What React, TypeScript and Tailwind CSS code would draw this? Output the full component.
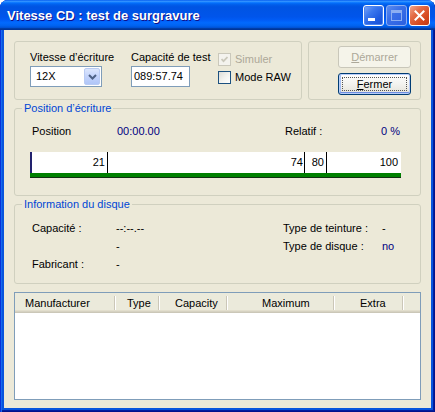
import React from "react";

const navy = "text-[#000080]";

function TitleButtons() {
  return (
    <div className="flex gap-[2px]">
      <div className="relative h-[21px] w-[21px] rounded-[3px] border border-white bg-[linear-gradient(135deg,#7FA8F8_0%,#3C78EE_35%,#1F5BE0_70%,#1A4FD0_100%)] shadow-[inset_0_0_0_1px_#4A82F0]">
        <span className="absolute left-[4px] top-[12px] h-[3px] w-[7px] bg-white" />
      </div>
      <div className="relative h-[21px] w-[21px] rounded-[3px] border border-[#8CAEF2] bg-[linear-gradient(135deg,#5A8CF0_0%,#3A6FE8_40%,#2A5FE0_100%)]">
        <span className="absolute left-[4px] top-[4px] h-[11px] w-[11px] border border-t-[3px] border-[#8CAEF2]" />
      </div>
      <div className="flex h-[21px] w-[21px] items-center justify-center rounded-[3px] border border-white bg-[linear-gradient(135deg,#F0A58C_0%,#E36A45_35%,#D6491F_70%,#C23A16_100%)]">
        <svg width="11" height="11" viewBox="0 0 11 11">
          <path d="M1.5 1.5 L9.5 9.5 M9.5 1.5 L1.5 9.5" stroke="white" strokeWidth="2" strokeLinecap="square" />
        </svg>
      </div>
    </div>
  );
}

function Checkbox({ label, checked, disabled }: { label: string; checked?: boolean; disabled?: boolean }) {
  return (
    <div className="flex h-[13px] items-center">
      <span
        className={
          disabled
            ? "flex h-[13px] w-[13px] items-center justify-center border border-[#CAC8BB] bg-[#F4F3EE]"
            : "flex h-[13px] w-[13px] items-center justify-center border border-[#1C5180] bg-[linear-gradient(135deg,#DCDCD7_0%,#F2F2EE_50%,#FFFFFF_100%)]"
        }
      >
        {checked ? (
          <svg width="7" height="7" viewBox="0 0 7 7">
            <path d="M0.5 3 L2.5 5.2 L6.5 1" stroke={disabled ? "#CAC8BB" : "#21A121"} strokeWidth="1.8" fill="none" />
          </svg>
        ) : null}
      </span>
      <span className={disabled ? "ml-[4px] text-[#ACA899]" : "ml-[4px]"}>{label}</span>
    </div>
  );
}

function Header({ label, width, pad }: { label: string; width: number; pad: number }) {
  return (
    <div className="flex h-full items-center justify-between" style={{ width, paddingLeft: pad }}>
      <span>{label}</span>
      <span className="my-[3px] w-[2px] self-stretch border-l border-r border-l-[#CBC7B8] border-r-white" />
    </div>
  );
}

export default function App() {
  return (
    <div className="h-[412px] w-[435px] bg-white font-['Liberation_Sans',Arial,sans-serif] text-[11px] leading-[13px] text-black">
      <div className="flex h-full flex-col rounded-t-[8px] bg-[#0855DD] shadow-[inset_1px_0_#0831D9,inset_2px_0_#166AEE,inset_-1px_-1px_#00138C,inset_-2px_-2px_#001EA0]">
        {/* title bar */}
        <div className="flex h-[30px] items-center justify-between rounded-t-[8px] bg-[linear-gradient(to_bottom,#0058EE_0%,#3593FF_4%,#288EFF_6%,#127DFF_8%,#036FFC_10%,#0262EE_14%,#0057E5_20%,#0054E3_24%,#0055EB_56%,#005BF5_66%,#026AFE_76%,#0062EF_86%,#0052D6_92%,#0040AB_94%,#003092_100%)] pl-[7px] pr-[5px]">
          <span className="pt-[1px] text-[13px] font-bold leading-[16px] text-white [text-shadow:1px_1px_#0F1089]">
            Vitesse CD : test de surgravure
          </span>
          <TitleButtons />
        </div>

        {/* client */}
        <div className="mx-[4px] mb-[4px] flex flex-1 flex-col bg-[#ECE9D8] px-[10px] pb-[8px] pt-[11px]">
          <div className="flex h-[59px] gap-[6px]">
            <div className="flex w-[288px] rounded-[3px] border border-[#D0D0BF] pl-[15px]">
              <div className="w-[101px] pt-[9px]">
                <div>Vitesse d’écriture</div>
                <div className="mt-[2px] flex h-[21px] w-[72px] items-center border border-[#7F9DB9] bg-white p-[1px]">
                  <span className="flex-1 pl-[4px]">12X</span>
                  <span className="flex h-full w-[16px] items-center justify-center rounded-[2px] border border-[#B9CBF3] bg-[linear-gradient(to_bottom,#DCE6FD_0%,#C3D3FB_50%,#B0C6F8_100%)]">
                    <svg width="9" height="6" viewBox="0 0 9 6">
                      <path d="M1 1 L4.5 4.5 L8 1" stroke="#4D6185" strokeWidth="2" fill="none" />
                    </svg>
                  </span>
                </div>
              </div>
              <div className="w-[87px] pt-[9px]">
                <div>Capacité de test</div>
                <div className="mt-[2px] flex h-[21px] w-[59px] items-center border border-[#7F9DB9] bg-white pl-[2px]">
                  089:57.74
                </div>
              </div>
              <div className="flex flex-col gap-[5px] pt-[11px]">
                <Checkbox label="Simuler" checked disabled />
                <Checkbox label="Mode RAW" />
              </div>
            </div>
            <div className="flex w-[113px] flex-col gap-[5px] rounded-[3px] border border-[#D0D0BF] pl-[29px] pt-[4px]">
              <button className="h-[22px] w-[73px] rounded-[3px] border border-[#C9C7BA] bg-[#F5F4EA] text-[#ACA899]">
                <span className="underline">D</span>émarrer
              </button>
              <button className="relative h-[22px] w-[73px] rounded-[3px] border border-[#003C74] bg-[linear-gradient(to_bottom,#FFFFFF_0%,#F3F3EF_50%,#E4E2D8_100%)] shadow-[inset_0_0_0_1px_#B8CDF8,inset_0_-2px_0_#6D8CE0,inset_2px_0_0_#A7C0F5]">
                <span className="absolute inset-[3px] border border-dotted border-[#555]" />
                <span className="relative">
                  <span className="underline">F</span>ermer
                </span>
              </button>
            </div>
          </div>

          {/* position */}
          <fieldset className="mt-[2px] h-[94px] rounded-[3px] border border-[#D0D0BF] pl-[7px]">
            <legend className="px-[2px] text-[#0046D5]">Position d’écriture</legend>
            <div className="pl-[8px] pr-[19px]">
              <div className="mt-[10px] flex pl-[2px]">
                <span className="w-[85px]">Position</span>
                <span className={`w-[168px] ${navy}`}>00:00.00</span>
                <span className="w-[96px]">Relatif :</span>
                <span className={navy}>0 %</span>
              </div>
              <div className="mt-[14px]">
                <div className="flex h-[21px] border-l-2 border-[#22226E] bg-white">
                  <div className="flex w-[76px] items-center justify-end border-r border-black pr-[2px]">21</div>
                  <div className="flex w-[197px] items-center justify-end border-r border-black pr-[1px]">74</div>
                  <div className="flex w-[22px] items-center justify-end border-r border-black pr-[2px]">80</div>
                  <div className="flex flex-1 items-center justify-end pr-[3px]">100</div>
                </div>
                <div className="h-[5px] border-b border-[#103010] bg-[#008000]" />
              </div>
            </div>
          </fieldset>

          {/* disque */}
          <fieldset className="mt-[2px] h-[86px] rounded-[3px] border border-[#D0D0BF] pl-[7px]">
            <legend className="px-[2px] text-[#0046D5]">Information du disque</legend>
            <div className="mt-[11px] grid grid-cols-[84px_167px_99px_auto] gap-y-[5px] pl-[10px]">
              <span>Capacité :</span>
              <span>--:--.--</span>
              <span>Type de teinture :</span>
              <span>-</span>
              <span />
              <span>-</span>
              <span>Type de disque :</span>
              <span className={navy}>no</span>
              <span>Fabricant :</span>
              <span>-</span>
              <span />
              <span />
            </div>
          </fieldset>

          {/* list */}
          <div className="mt-[8px] h-[108px] border border-[#7F9DB9] bg-white">
            <div className="flex h-[20px] bg-[#EBEADB] shadow-[inset_0_-1px_#CBC7B8,inset_0_-2px_#D6D2C2,inset_0_-3px_#E2DECD]">
              <Header label="Manufacturer" width={101} pad={10} />
              <Header label="Type" width={44} pad={11} />
              <Header label="Capacity" width={68} pad={15} />
              <Header label="Maximum" width={107} pad={34} />
              <Header label="Extra" width={69} pad={25} />
            </div>
          </div>
        </div>
      </div>
    </div>
  );
}
